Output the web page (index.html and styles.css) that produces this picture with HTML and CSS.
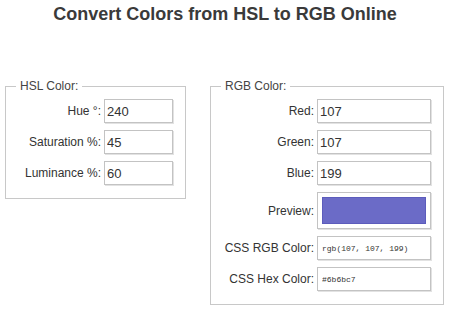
FILE: index.html
```html
<!DOCTYPE html>
<html lang="en">
<head>
    <meta charset="UTF-8">
    <meta name="viewport" content="width=device-width, initial-scale=1.0">
    <title>Convert Colors from HSL to RGB Online</title>
    <link rel="stylesheet" href="styles.css">
</head>
<body>
    <h1>Convert Colors from HSL to RGB Online</h1>

    <div class="panels">
        <!-- HSL input -->
        <fieldset class="panel panel-hsl">
            <legend>HSL Color:</legend>
            <div class="rows">
                <label for="hue">Hue °:</label>
                <input type="text" id="hue" value="240">
                <label for="sat">Saturation %:</label>
                <input type="text" id="sat" value="45">
                <label for="lum">Luminance %:</label>
                <input type="text" id="lum" value="60">
            </div>
        </fieldset>

        <!-- RGB output -->
        <fieldset class="panel panel-rgb">
            <legend>RGB Color:</legend>
            <div class="rows">
                <label for="red">Red:</label>
                <input type="text" id="red" value="107">
                <label for="green">Green:</label>
                <input type="text" id="green" value="107">
                <label for="blue">Blue:</label>
                <input type="text" id="blue" value="199">
                <label>Preview:</label>
                <div class="preview"><div class="swatch"></div></div>
                <label for="cssrgb">CSS RGB Color:</label>
                <input type="text" id="cssrgb" class="code" value="rgb(107, 107, 199)" readonly>
                <label for="csshex">CSS Hex Color:</label>
                <input type="text" id="csshex" class="code" value="#6b6bc7" readonly>
            </div>
        </fieldset>
    </div>
</body>
</html>
```

FILE: styles.css
```css
body {
    margin: 0;
    font-family: "Liberation Sans", Arial, sans-serif;
    color: #333;
    background-color: white;
}

h1 {
    font-size: 18px;
    text-align: center;
    margin: 0;
    padding-top: 3px;
    line-height: 22px;
    color: #3a3a3a;
}

/* Two boxes side by side */
.panels {
    display: flex;
    align-items: flex-start;
    gap: 24px;
    padding: 54px 0 0 5px;
}

.panel {
    margin: 0;
    border: 1px solid #c8c8c8;
    padding: 6px 12px 13px 12px;
    box-sizing: border-box;
}

.panel legend {
    font-size: 12px;
    color: #444;
    padding: 0 4px;
    margin-left: -2px;
}

.panel-hsl {
    width: 181px;
}

.panel-rgb {
    width: 234px;
}

.rows {
    display: grid;
    column-gap: 3px;
    row-gap: 7px;
    align-items: center;
}

.panel-hsl .rows {
    grid-template-columns: 1fr 69px;
}

.panel-rgb .rows {
    grid-template-columns: 1fr 114px;
}

.rows label {
    text-align: right;
    font-size: 12px;
    white-space: nowrap;
    color: #333;
}

.rows input {
    box-sizing: border-box;
    height: 24px;
    width: 100%;
    margin: 0;
    padding: 1px 2px;
    border: 1px solid #c3c3c3;
    box-shadow: 1px 1px 0 #e2e2e2;
    font-family: "Liberation Sans", Arial, sans-serif;
    font-size: 13px;
    color: #333;
    background: white;
}

.rows input.code {
    font-family: "Liberation Mono", "DejaVu Sans Mono", monospace;
    font-size: 8px;
    padding: 1px 4px;
}

.preview {
    box-sizing: border-box;
    height: 37px;
    padding: 4px;
    border: 1px solid #c3c3c3;
    box-shadow: 1px 1px 0 #e2e2e2;
}

.swatch {
    height: 100%;
    box-sizing: border-box;
    background-color: #6b6bc7;
    border: 1px solid #5c5cbc;
}
```
